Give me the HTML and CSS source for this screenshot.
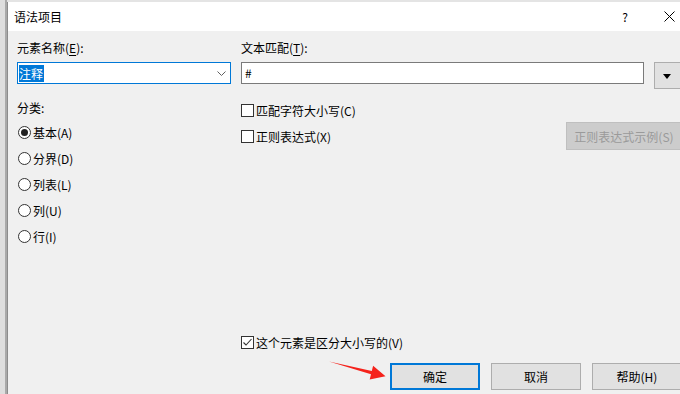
FILE: index.html
```html
<!DOCTYPE html>
<html lang="zh-CN">
<head>
<meta charset="utf-8">
<title>语法项目</title>
<link rel="stylesheet" href="styles.css">
</head>
<body>
<div class="dialog">
  <div class="titlebar">
    <span class="title">语法项目</span>
    <span class="help">?</span>
    <span class="close">
      <svg width="11" height="11" viewBox="0 0 11 11"><path d="M0.5 0.5 L10.5 10.5 M10.5 0.5 L0.5 10.5" stroke="#000" stroke-width="1" fill="none"/></svg>
    </span>
  </div>
  <div class="content">
    <div class="col-left">
      <div class="label">元素名称(<u>E</u>):</div>
      <div class="combo">
        <span class="sel">注释</span>
        <svg class="chev" width="9" height="5" viewBox="0 0 9 5"><path d="M0.5 0.5 L4.5 4.5 L8.5 0.5" stroke="#606060" stroke-width="1" fill="none"/></svg>
      </div>
      <div class="label group">分类:</div>
      <div class="radios">
        <div class="radio on"><span class="dot"></span><span>基本(A)</span></div>
        <div class="radio"><span class="dot"></span><span>分界(D)</span></div>
        <div class="radio"><span class="dot"></span><span>列表(L)</span></div>
        <div class="radio"><span class="dot"></span><span>列(U)</span></div>
        <div class="radio"><span class="dot"></span><span>行(I)</span></div>
      </div>
    </div>
    <div class="col-right">
      <div class="label">文本匹配(<u>T</u>):</div>
      <div class="match-row">
        <div class="textbox">#</div>
        <div class="dd-btn"><span class="tri"></span></div>
      </div>
      <div class="opts">
        <div class="checks">
          <div class="check"><span class="box"></span><span>匹配字符大小写(C)</span></div>
          <div class="check"><span class="box"></span><span>正则表达式(X)</span></div>
        </div>
        <div class="btn-disabled">正则表达式示例(S)</div>
      </div>
      <div class="check bottom-check">
        <span class="box">
          <svg width="11" height="11" viewBox="0 0 11 11"><path d="M1.5 5.5 L4 8 L9.5 2" stroke="#333" stroke-width="1.1" fill="none"/></svg>
        </span>
        <span>这个元素是区分大小写的(V)</span>
      </div>
    </div>
  </div>
  <div class="footer">
    <div class="btn default">确定</div>
    <div class="btn">取消</div>
    <div class="btn">帮助(H)</div>
  </div>
</div>
<svg class="arrow" width="680" height="394" viewBox="0 0 680 394">
  <polygon points="329,361.5 371.8,371.1 373.1,365.8 385.5,376.2 369.7,379.6 371,374.2" fill="#f5221b"/>
</svg>
</body>
</html>
```

FILE: styles.css
```css
* {
  box-sizing: border-box;
}

html, body {
  margin: 0;
}

body {
  width: 680px;
  height: 394px;
  overflow: hidden;
  position: relative;
  padding: 2px 0 0 7px;
  background: linear-gradient(to right, #dedede 0 5px, #a9a9a9 5px 7px, #e4e4e4 7px);
  font-family: "Noto Sans CJK SC", "Microsoft YaHei", sans-serif;
  font-size: 12px;
  color: #000;
}

.dialog {
  width: 685px;
  height: 398px;
  background: #f0f0f0;
  border-left: 1px solid #8c8c8c;
  display: flex;
  flex-direction: column;
}

.titlebar {
  flex: none;
  height: 29px;
  background: #fff;
  display: flex;
  align-items: center;
  padding: 0 13px 0 6px;
}

.title {
  line-height: 16px;
}

.help {
  margin-left: auto;
  width: 20px;
  text-align: center;
  line-height: 16px;
}

.close {
  width: 20px;
  margin-left: 24px;
  display: flex;
  justify-content: center;
}

.close svg {
  display: block;
}

.content {
  flex: 1;
  display: flex;
  gap: 10px;
  padding: 9px 10px 7px 9px;
}

.col-left {
  width: 214px;
  display: flex;
  flex-direction: column;
}

.col-right {
  flex: 1;
  display: flex;
  flex-direction: column;
}

.label {
  height: 16px;
  line-height: 16px;
  white-space: nowrap;
}

.label u {
  text-underline-offset: 2px;
}

.combo {
  margin-top: 6px;
  height: 22px;
  border: 1px solid #0078d7;
  background: #fff;
  display: flex;
  align-items: center;
  justify-content: space-between;
  padding-left: 1px;
}

.sel {
  background: #0078d7;
  color: #fff;
  height: 17px;
  line-height: 17px;
  padding-right: 1px;
}

.chev {
  display: block;
  margin-right: 4px;
}

.group {
  margin-top: 16px;
}

.radios {
  margin-top: 3px;
  display: flex;
  flex-direction: column;
}

.radio {
  height: 26px;
  display: flex;
  align-items: center;
  gap: 2px;
  white-space: nowrap;
}

.radio .dot {
  width: 13px;
  height: 13px;
  margin-left: 1px;
  border: 1px solid #333;
  border-radius: 50%;
  background: #fff;
  display: flex;
  align-items: center;
  justify-content: center;
}

.radio.on .dot::after {
  content: "";
  width: 7px;
  height: 7px;
  border-radius: 50%;
  background: #222;
}

.match-row {
  margin-top: 6px;
  display: flex;
  gap: 10px;
  align-items: flex-start;
}

.textbox {
  width: 403px;
  height: 22px;
  border: 1px solid #7a7a7a;
  background: #fff;
  padding-left: 3px;
  line-height: 20px;
}

.dd-btn {
  width: 28px;
  height: 27px;
  background: #e1e1e1;
  border: 1px solid #adadad;
  display: flex;
  align-items: center;
  justify-content: center;
  padding-right: 2px;
}

.tri {
  width: 0;
  height: 0;
  border-left: 4.5px solid transparent;
  border-right: 4.5px solid transparent;
  border-top: 5px solid #000;
  margin-top: 1px;
}

.opts {
  margin-top: 8px;
  display: flex;
  align-items: flex-end;
}

.checks {
  display: flex;
  flex-direction: column;
}

.check {
  height: 26px;
  display: flex;
  align-items: center;
  gap: 2px;
  white-space: nowrap;
}

.box {
  width: 13px;
  height: 13px;
  border: 1px solid #333;
  background: #fff;
  display: flex;
  align-items: center;
  justify-content: center;
}

.box svg {
  display: block;
}

.btn-disabled {
  margin-left: auto;
  margin-bottom: -1px;
  width: 116px;
  height: 28px;
  background: #cccccc;
  border: 1px solid #bfbfbf;
  color: #9a9a9a;
  display: flex;
  align-items: center;
  justify-content: center;
  white-space: nowrap;
}

.bottom-check {
  margin-top: auto;
}

.footer {
  flex: none;
  height: 38px;
  display: flex;
  justify-content: flex-end;
  align-items: flex-start;
  gap: 11px;
  padding: 1px 10px 10px 9px;
}

.btn {
  width: 90px;
  height: 27px;
  background: #e1e1e1;
  border: 1px solid #adadad;
  display: flex;
  align-items: center;
  justify-content: center;
  white-space: nowrap;
}

.btn.default {
  border-color: #0078d7;
  box-shadow: inset 0 0 0 1px #0078d7;
}

.arrow {
  position: absolute;
  left: 0;
  top: 0;
  pointer-events: none;
}
```
